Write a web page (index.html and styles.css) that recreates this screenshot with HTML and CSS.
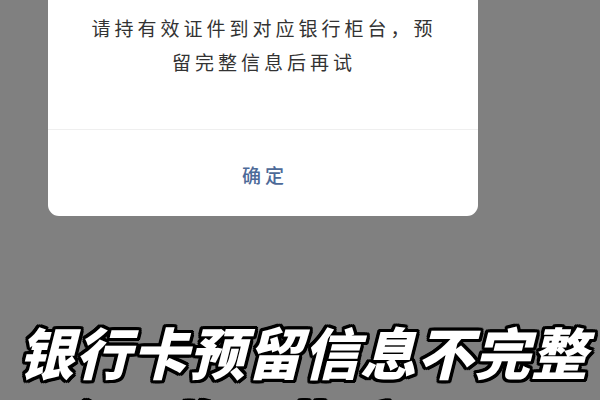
FILE: index.html
```html
<!DOCTYPE html>
<html lang="zh-CN">
<head>
<meta charset="utf-8">
<link rel="stylesheet" href="styles.css">
</head>
<body>
<div class="screen">
  <div class="dialog">
    <div class="msg">请持有效证件到对应银行柜台，预<br>留完整信息后再试</div>
    <div class="divider"></div>
    <div class="btn">确定</div>
  </div>
  <div class="title">银行卡预留信息不完整</div>
  <div class="title next">会面临哪些后果呢？</div>
</div>
</body>
</html>
```
FILE: styles.css
```css
html, body {
  margin: 0;
  padding: 0;
  background: #808080;
}
.screen {
  width: 600px;
  height: 400px;
  overflow: hidden;
  background: #808080;
  font-family: "Noto Sans CJK SC", "Noto Sans", sans-serif;
}
.dialog {
  margin-left: 48px;
  width: 430px;
  height: 216px;
  background: #ffffff;
  border-radius: 0 0 11px 11px;
  display: flex;
  flex-direction: column;
}
.msg {
  height: 118px;
  padding-top: 11px;
  text-align: center;
  font-size: 19px;
  line-height: 34px;
  letter-spacing: 4px;
  color: #333333;
  font-weight: 400;
  padding-left: 2px;
}
.divider {
  height: 1px;
  background: #efefef;
}
.btn {
  flex: 1;
  display: flex;
  align-items: center;
  justify-content: center;
  font-size: 19px;
  letter-spacing: 4px;
  padding-left: 4px;
  padding-top: 2px;
  color: #4d6a98;
  font-weight: 500;
}
.title {
  margin-top: 100px;
  text-align: center;
  font-size: 56px;
  line-height: 70px;
  font-weight: 900;
  font-style: italic;
  letter-spacing: 1px;
  color: #ffffff;
  white-space: nowrap;
  padding-left: 6px;
  text-shadow:
    3px 0 0 #000, -3px 0 0 #000, 0 3px 0 #000, 0 -3px 0 #000,
    2px 2px 0 #000, -2px 2px 0 #000, 2px -2px 0 #000, -2px -2px 0 #000,
    3px 2px 0 #000, -3px 2px 0 #000, 3px -2px 0 #000, -3px -2px 0 #000,
    2px 3px 0 #000, -2px 3px 0 #000, 2px -3px 0 #000, -2px -3px 0 #000;
}
.title.next {
  margin-top: 4px;
}
```
